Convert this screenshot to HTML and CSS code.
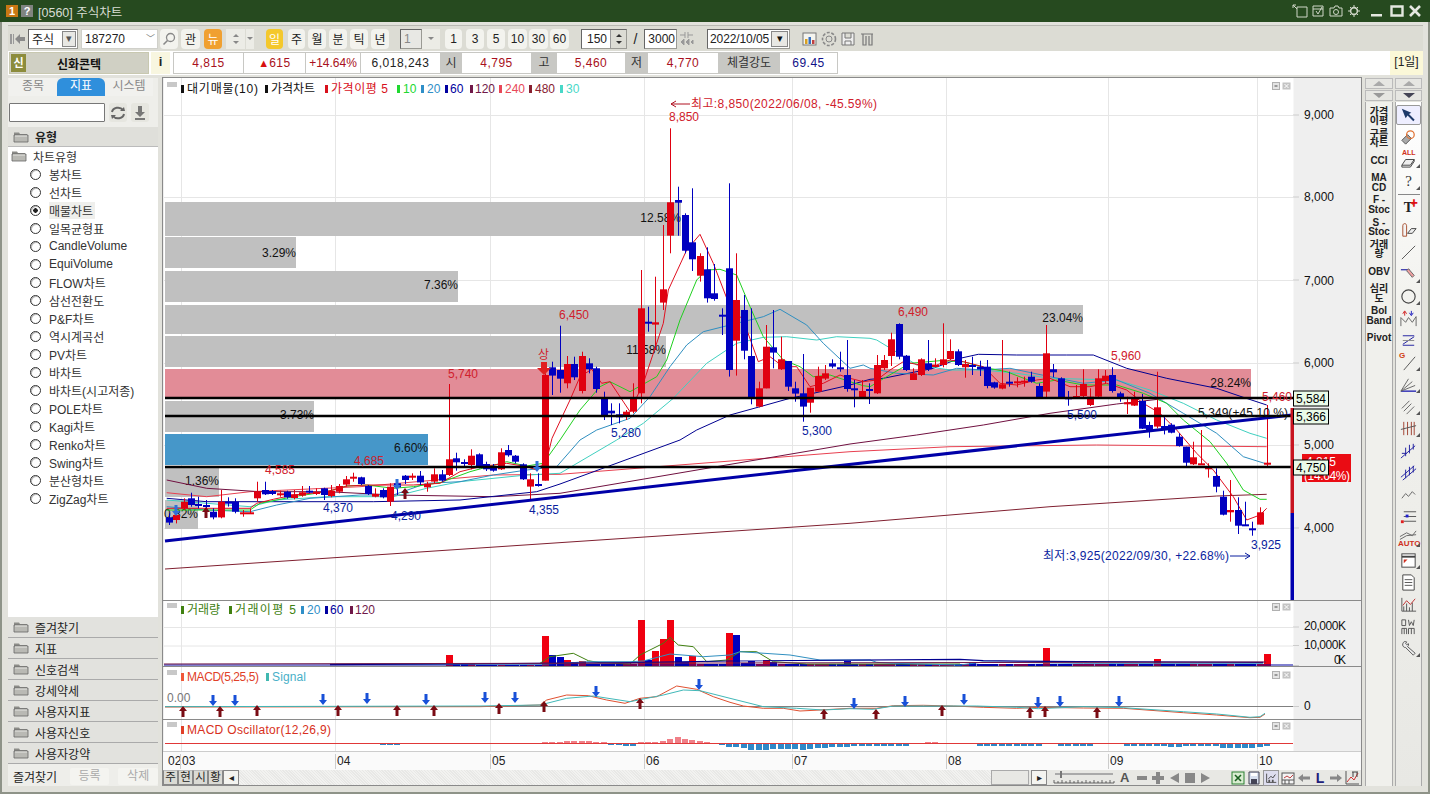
FILE: index.html
```html
<!DOCTYPE html>
<html lang="ko">
<head>
<meta charset="utf-8">
<title>[0560] 주식차트</title>
<link rel="stylesheet" href="styles.css">
</head>
<body>
<svg class="defs" width="0" height="0" aria-hidden="true">
  <symbol id="folder" viewBox="0 0 16 12"><path d="M1 3 V1.5 H6 L7 3 H14 V5 H1Z" fill="#8c8c88"/><path d="M1 4 H15 V11 H1Z" fill="#b9b9b4" stroke="#666" stroke-width=".8"/><path d="M2 5 H14" stroke="#e6e6e2"/></symbol>
  <symbol id="ctl" viewBox="0 0 19 8"><rect x=".5" y=".5" width="7" height="7" fill="#e4e4e4" stroke="#b0b0b0"/><rect x="2.5" y="3" width="3" height="2" fill="#999"/><rect x="10.5" y=".5" width="8" height="7" fill="#c4c4c4"/><path d="M12.5 2 L16.5 6 M16.5 2 L12.5 6" stroke="#fff"/></symbol>
</svg>
<div class="window">
  <header class="titlebar">
    <span class="tb-badge tb-one">1</span><span class="tb-badge tb-help">?</span>
    <span class="tb-title">[0560] 주식차트</span>
    <span class="tb-right">
      <svg width="16" height="14" viewBox="0 0 16 14"><path d="M5 3 H15 V13 H5Z M1 1 L5 5 M1 1 H4 M1 1 V4" fill="none" stroke="#cfd6c8"/></svg>
      <svg width="16" height="14" viewBox="0 0 16 14"><path d="M3 2 H13 V12 H3Z M6 7 L8 10 L12 3 M3 5 H13" fill="none" stroke="#cfd6c8"/></svg>
      <svg width="16" height="14" viewBox="0 0 16 14"><path d="M2 4 H6 L7 2 H10 L11 4 H14 V12 H2Z" fill="none" stroke="#cfd6c8"/><circle cx="8" cy="8" r="2.5" fill="none" stroke="#cfd6c8"/></svg>
      <svg width="16" height="14" viewBox="0 0 16 14"><circle cx="8" cy="7" r="3.4" fill="none" stroke="#cfd6c8" stroke-width="1.6"/><path d="M8 1V3 M8 11V13 M2 7H4 M12 7H14 M4 3L5.5 4.5 M12 3L10.5 4.5 M4 11L5.5 9.5 M12 11L10.5 9.5" stroke="#cfd6c8"/></svg>
      <svg class="tb-gap" width="14" height="14" viewBox="0 0 14 14"><rect x="1" y="10" width="11" height="2.5" fill="#e4e8e0"/></svg>
      <svg class="tb-max" width="14" height="14" viewBox="0 0 14 14"><path d="M1.5 2.5 H12.5 V11.5 H1.5Z" fill="none" stroke="#e4e8e0" stroke-width="2.4"/></svg>
      <svg width="14" height="14" viewBox="0 0 14 14"><path d="M2 2 L12 12 M12 2 L2 12" stroke="#e4e8e0" stroke-width="2.6"/></svg>
    </span>
  </header>

  <div class="frame">
    <div class="toolbar">
      <svg class="t-prev" width="17" height="14" viewBox="0 0 17 14"><path d="M1 2H3V12H1Z M4 2H5V12H4Z" fill="#9a9a9a"/><path d="M6 7L11 2V5H16V9H11V12Z" fill="#8a8a8a"/></svg>
      <span class="field f-market"><span class="f-text">주식</span><span class="combo-btn">▾</span></span>
      <span class="field f-code"><span class="f-text">187270</span><span class="chev">﹀</span></span>
      <span class="tbtn t-search"><svg width="14" height="14" viewBox="0 0 14 14"><circle cx="8.5" cy="5.5" r="4" fill="none" stroke="#888" stroke-width="1.3"/><path d="M5.5 8.5L1.5 12.5" stroke="#888" stroke-width="1.6"/></svg></span>
      <span class="tbtn t-gwan">관</span>
      <span class="tbtn t-orange">뉴</span>
      <span class="spin-pair"><i class="tri-up"></i><i class="tri-dn"></i></span>
      <span class="mini-dn"><i class="tri-dn"></i></span>
      <span class="tbtn t-yellow">일</span>
      <span class="tbtn t-week">주</span><span class="tbtn t-per">월</span><span class="tbtn t-per">분</span><span class="tbtn t-per">틱</span><span class="tbtn t-per">년</span>
      <span class="field f-period"><span class="f-text f-dim">1</span></span><span class="mini-dn mini-dn2"><i class="tri-dn"></i></span>
      <span class="tbtn t-n1">1</span><span class="tbtn t-n3">3</span><span class="tbtn t-n5">5</span><span class="tbtn t-n10">10</span><span class="tbtn t-n30">30</span><span class="tbtn t-n30">60</span>
      <span class="field f-count"><span class="f-right">150</span><span class="updown"><i class="tri-up"></i><i class="tri-dn"></i></span></span>
      <span class="slash">/</span>
      <span class="field f-total"><span class="f-right">3000</span></span>
      <svg class="t-arrows" width="15" height="15" viewBox="0 0 15 15"><path d="M1 4H6 M6 1V7 M9 1V7 M9 4H14 M2 11L5 8V14Z M7 11L10 8V14Z M12 11L14 9V13Z" stroke="#999" fill="#999"/></svg>
      <span class="field f-date"><span class="f-text">2022/10/05</span><span class="combo-btn combo-dark">▾</span></span>
      <span class="t-tools">
        <svg width="18" height="18" viewBox="0 0 18 18"><rect x="2" y="3" width="13" height="12" fill="#f4f4ee" stroke="#777"/><rect x="4" y="9" width="2.5" height="5" fill="#d8a020"/><rect x="7.5" y="7" width="2.5" height="7" fill="#3870c0"/><rect x="11" y="10" width="2.5" height="4" fill="#c04040"/></svg>
        <svg width="18" height="18" viewBox="0 0 18 18"><circle cx="9" cy="9" r="3" fill="none" stroke="#888"/><circle cx="9" cy="9" r="6.5" fill="none" stroke="#888" stroke-dasharray="3 1.6" stroke-width="1.6"/></svg>
        <svg width="18" height="18" viewBox="0 0 18 18"><path d="M3 3H15V15H3Z M6 3V8H12V3 M6 15V11H12V15" fill="#eee" stroke="#777"/></svg>
        <svg width="18" height="18" viewBox="0 0 18 18"><path d="M3 4H15 M5 4V15H8V6 M11 6V15H14V4" fill="none" stroke="#777" stroke-width="1.2"/></svg>
      </span>
    </div>

    <div class="inforow">
      <span class="name"><b class="name-b">신</b><b class="name-t">신화콘텍</b></span>
      <span class="info-i">i</span>
      <span class="cell c71 first red">4,815</span>
      <span class="cell c62 red"><em class="up">▲</em>615</span>
      <span class="cell c55 red">+14.64%</span>
      <span class="cell c80">6,018,243</span>
      <span class="cell ch c21">시</span>
      <span class="cell c70 red">4,795</span>
      <span class="cell ch c25">고</span>
      <span class="cell c69 red">5,460</span>
      <span class="cell ch c22">저</span>
      <span class="cell c71 red">4,770</span>
      <span class="cell ch c61">체결강도</span>
      <span class="cell c59 navy">69.45</span>
      <span class="fill"></span>
      <span class="period">[1일]</span>
    </div>

    <div class="workspace">
      <aside class="sidebar">
        <div class="sb-tabs"><span class="sb-tab">종목</span><span class="sb-tab on">지표</span><span class="sb-tab">시스템</span></div>
        <div class="sb-search">
          <span class="sb-input"></span>
          <span class="sb-ibtn"><svg width="16" height="14" viewBox="0 0 16 14"><path d="M2 6A6 5 0 0 1 13 4 M14 8A6 5 0 0 1 3 10" fill="none" stroke="#666" stroke-width="2"/><path d="M10 5L15 5L14 1Z M6 9L1 9L2 13Z" fill="#666"/></svg></span>
          <span class="sb-ibtn"><svg width="14" height="16" viewBox="0 0 14 16"><path d="M5 1H9V7H12L7 12L2 7H5Z M2 13H12V15H2Z" fill="#777"/></svg></span>
        </div>
        <div class="sb-head"><svg class="fold" width="16" height="12"><use href="#folder"/></svg><b>유형</b></div>
        <div class="sb-list">
          <div class="sb-root"><svg class="fold" width="16" height="12"><use href="#folder"/></svg>차트유형</div>
          <div class="sb-item"><i class="radio"></i>봉차트</div>
          <div class="sb-item"><i class="radio"></i>선차트</div>
          <div class="sb-item"><i class="radio sel"></i><span class="hl">매물차트</span></div>
          <div class="sb-item"><i class="radio"></i>일목균형표</div>
          <div class="sb-item"><i class="radio"></i>CandleVolume</div>
          <div class="sb-item"><i class="radio"></i>EquiVolume</div>
          <div class="sb-item"><i class="radio"></i>FLOW차트</div>
          <div class="sb-item"><i class="radio"></i>삼선전환도</div>
          <div class="sb-item"><i class="radio"></i>P&amp;F차트</div>
          <div class="sb-item"><i class="radio"></i>역시계곡선</div>
          <div class="sb-item"><i class="radio"></i>PV차트</div>
          <div class="sb-item"><i class="radio"></i>바차트</div>
          <div class="sb-item"><i class="radio"></i>바차트(시고저종)</div>
          <div class="sb-item"><i class="radio"></i>POLE차트</div>
          <div class="sb-item"><i class="radio"></i>Kagi차트</div>
          <div class="sb-item"><i class="radio"></i>Renko차트</div>
          <div class="sb-item"><i class="radio"></i>Swing차트</div>
          <div class="sb-item"><i class="radio"></i>분산형차트</div>
          <div class="sb-item"><i class="radio"></i>ZigZag차트</div>
        </div>
        <div class="sb-acc"><svg class="fold" width="16" height="12"><use href="#folder"/></svg>즐겨찾기</div>
        <div class="sb-acc"><svg class="fold" width="16" height="12"><use href="#folder"/></svg>지표</div>
        <div class="sb-acc"><svg class="fold" width="16" height="12"><use href="#folder"/></svg>신호검색</div>
        <div class="sb-acc"><svg class="fold" width="16" height="12"><use href="#folder"/></svg>강세약세</div>
        <div class="sb-acc"><svg class="fold" width="16" height="12"><use href="#folder"/></svg>사용자지표</div>
        <div class="sb-acc"><svg class="fold" width="16" height="12"><use href="#folder"/></svg>사용자신호</div>
        <div class="sb-acc"><svg class="fold" width="16" height="12"><use href="#folder"/></svg>사용자강약</div>
        <div class="sb-foot"><span class="sb-fav">즐겨찾기</span><span class="sb-fbtn">등록</span><span class="sb-fbtn">삭제</span></div>
      </aside>

      <section class="chart">
        <svg class="plot" width="1198" height="522" viewBox="163 78 1198 522">
          <rect class="axis" x="163" y="78" width="1198" height="522"/>
          <rect class="paper" x="164" y="78" width="1129.5" height="522"/>
          <g id="grid-main"></g>
          <rect class="vp" x="165" y="202" width="516" height="34"/>
          <rect class="vp" x="165" y="237" width="131" height="31"/>
          <rect class="vp" x="165" y="271" width="293" height="31"/>
          <rect class="vp" x="165" y="305" width="918" height="29"/>
          <rect class="vp" x="165" y="336" width="501" height="31"/>
          <rect class="vp-pink" x="165" y="369" width="1086" height="29"/>
          <rect class="vp" x="165" y="401" width="149" height="31"/>
          <rect class="vp-blue" x="165" y="434" width="263" height="31"/>
          <rect class="vp" x="165" y="468" width="54" height="29"/>
          <rect class="vp" x="165" y="500" width="33" height="29"/>
          <g class="pct">
            <text x="296" y="257">3.29%</text><text x="681" y="222">12.58%</text><text x="458" y="289">7.36%</text>
            <text x="1083" y="322">23.04%</text><text x="666" y="354">11.58%</text><text x="1251" y="387">28.24%</text>
            <text x="314" y="419">3.73%</text><text x="428" y="452">6.60%</text><text x="219" y="485">1.36%</text><text x="198" y="518">0.82%</text>
          </g>
          <g id="mas"></g>
          <g id="candles"></g>
          <line class="trend" x1="165" y1="541" x2="1292" y2="415"/>
          <g class="hl-lines"><line x1="165" y1="398" x2="1293" y2="398"/><line x1="165" y1="416" x2="1293" y2="416"/><line x1="165" y1="467" x2="1293" y2="467"/></g>
          <g id="arrows-main"></g>
          <g class="lbl-red">
            <text x="669" y="121">8,850</text><text x="559" y="319">6,450</text><text x="448" y="378">5,740</text><text x="265" y="474">4,585</text>
            <text x="354" y="465">4,685</text><text x="898" y="316">6,490</text><text x="1111" y="360">5,960</text><text x="1262" y="401">5,460</text>
            <text x="538" y="359">상</text>
            <text x="691" y="108" textLength="186">최고:8,850(2022/06/08, -45.59%)</text>
          </g>
          <path class="red-arrow" d="M671 104 H690 M671 104 L676 101 M671 104 L676 107"/>
          <g class="lbl-blue">
            <text x="611" y="437">5,280</text><text x="802" y="435">5,300</text><text x="1067" y="419">5,500</text><text x="323" y="512">4,370</text>
            <text x="391" y="520">4,290</text><text x="529" y="514">4,355</text><text x="1251" y="549">3,925</text>
            <text x="1043" y="560" textLength="186">최저:3,925(2022/09/30, +22.68%)</text>
          </g>
          <path class="blue-arrow" d="M1230 556 H1250 M1250 556 L1245 553 M1250 556 L1245 559"/>
          <text class="lbl-black" x="1198" y="417" textLength="90">5,349(+45.10 %)</text>
          <g class="ticks"><path d="M1293 115H1299 M1293 197H1299 M1293 280H1299 M1293 363H1299 M1293 445H1299 M1293 528H1299"/></g>
          <g class="ax-txt"><text x="1304" y="119">9,000</text><text x="1304" y="201">8,000</text><text x="1304" y="285">7,000</text><text x="1304" y="367">6,000</text><text x="1304" y="449">5,000</text><text x="1304" y="532">4,000</text></g>
          <rect class="cur-red" x="1302" y="454" width="49" height="28"/>
          <text class="cur-txt" x="1306" y="466">4,815</text><text class="cur-txt" x="1304" y="480" textLength="46">(14.64%)</text>
          <rect class="bar-r" x="1290.5" y="408" width="3.5" height="105"/><rect class="bar-b" x="1290.5" y="513" width="3.5" height="87"/>
          <g class="tag"><rect x="1293.5" y="391" width="35" height="15"/><text x="1296" y="403">5,584</text><rect x="1293.5" y="409" width="35" height="15"/><text x="1296" y="421">5,366</text><rect x="1293.5" y="460" width="35" height="15"/><text x="1296" y="472">4,750</text></g>
          <rect class="tagmark" x="167" y="82" width="10" height="5"/>
          <use href="#ctl" x="1272" y="82" width="19" height="8"/>
          <g class="legend">
            <rect class="mk" x="181" y="85" width="3" height="8" fill="#111"/><text x="187" y="93" fill="#111" textLength="71">대기매물(10)</text>
            <rect class="mk" x="265" y="85" width="3" height="8" fill="#111"/><text x="271" y="93" fill="#111">가격차트</text>
            <rect class="mk" x="325" y="85" width="3" height="8" fill="#d8101c"/><text x="331" y="93" fill="#d8101c" textLength="57">가격이평 5</text>
            <rect class="mk" x="397" y="85" width="3" height="8" fill="#20d830"/><text x="403" y="93" fill="#20d830">10</text>
            <rect class="mk" x="421" y="85" width="3" height="8" fill="#2f8fc8"/><text x="427" y="93" fill="#2f8fc8">20</text>
            <rect class="mk" x="445" y="85" width="3" height="8" fill="#0000a0"/><text x="450" y="93" fill="#0000a0">60</text>
            <rect class="mk" x="470" y="85" width="3" height="8" fill="#701848"/><text x="475" y="93" fill="#701848">120</text>
            <rect class="mk" x="499" y="85" width="3" height="8" fill="#e84858"/><text x="505" y="93" fill="#e84858">240</text>
            <rect class="mk" x="529" y="85" width="3" height="8" fill="#882030"/><text x="535" y="93" fill="#882030">480</text>
            <rect class="mk" x="560" y="85" width="3" height="8" fill="#48d8c8"/><text x="566" y="93" fill="#48d8c8">30</text>
          </g>
        </svg>

        <svg class="plot" width="1198" height="66" viewBox="163 600 1198 66">
          <rect class="axis" x="163" y="600" width="1198" height="66"/>
          <rect class="paper" x="164" y="601" width="1129.5" height="65"/>
          <line class="sepline" x1="163" y1="600.5" x2="1361" y2="600.5"/>
          <g id="grid-vol"></g>
          <g id="volbars"></g>
          <g id="vollines"></g>
          <rect class="tagmark" x="167" y="603" width="10" height="5"/>
          <use href="#ctl" x="1272" y="603" width="19" height="8"/>
          <g class="legend">
            <rect class="mk" x="181" y="606" width="3" height="8" fill="#408010"/><text x="187" y="614" fill="#408010">거래량</text>
            <rect class="mk" x="229" y="606" width="3" height="8" fill="#408010"/><text x="235" y="614" fill="#408010" textLength="61">거래이평 5</text>
            <rect class="mk" x="301" y="606" width="3" height="8" fill="#2f8fc8"/><text x="307" y="614" fill="#2f8fc8">20</text>
            <rect class="mk" x="325" y="606" width="3" height="8" fill="#0000a0"/><text x="330" y="614" fill="#0000a0">60</text>
            <rect class="mk" x="350" y="606" width="3" height="8" fill="#701848"/><text x="355" y="614" fill="#701848">120</text>
          </g>
          <g class="ticks"><path d="M1293 627H1299 M1293 645.5H1299 M1293 665.5H1299"/></g>
          <g class="ax-txt"><text x="1304" y="630" textLength="42">20,000K</text><text x="1304" y="649" textLength="42">10,000K</text><text x="1334" y="664" textLength="12">0K</text></g>
        </svg>

        <svg class="plot" width="1198" height="53" viewBox="163 666 1198 53">
          <rect class="axis" x="163" y="666" width="1198" height="53"/>
          <rect class="paper" x="164" y="667" width="1129.5" height="52"/>
          <line class="sepline" x1="163" y1="666.5" x2="1361" y2="666.5"/>
          <g id="grid-macd"></g>
          <line class="zero" x1="165" y1="706.5" x2="1293" y2="706.5"/>
          <g id="macdlines"></g>
          <g id="arrows-macd"></g>
          <rect class="tagmark" x="167" y="670" width="10" height="5"/>
          <use href="#ctl" x="1272" y="671" width="19" height="8"/>
          <g class="legend">
            <rect class="mk" x="181" y="673" width="3" height="8" fill="#f05838"/><text x="187" y="681" fill="#e04028" textLength="72">MACD(5,25,5)</text>
            <rect class="mk" x="266" y="673" width="3" height="8" fill="#40b8b0"/><text x="272" y="681" fill="#48b0c8" textLength="34">Signal</text>
          </g>
          <text class="zero-txt" x="167" y="702">0.00</text>
          <g class="ticks"><path d="M1293 706.5H1299"/></g>
          <g class="ax-txt"><text x="1304" y="710">0</text></g>
        </svg>

        <svg class="plot" width="1198" height="32" viewBox="163 719 1198 32">
          <rect class="axis" x="163" y="719" width="1198" height="32"/>
          <rect class="paper" x="164" y="720" width="1129.5" height="31"/>
          <line class="sepline" x1="163" y1="719.5" x2="1361" y2="719.5"/>
          <g id="grid-osc"></g>
          <g id="oscbars"></g>
          <line class="osc0" x1="165" y1="743.5" x2="1293" y2="743.5"/>
          <rect class="tagmark" x="167" y="722" width="10" height="5"/>
          <use href="#ctl" x="1272" y="722" width="19" height="8"/>
          <g class="legend">
            <rect class="mk" x="181" y="726" width="3" height="8" fill="#e04028"/><text x="187" y="734" fill="#d83020" textLength="144">MACD Oscillator(12,26,9)</text>
          </g>
        </svg>

        <div class="dates">
          <span class="d d02">02</span><span class="d d03">03</span><span class="d d04">04</span><span class="d d05">05</span><span class="d d06">06</span><span class="d d07">07</span><span class="d d08">08</span><span class="d d09">09</span><span class="d d10">10</span>
        </div>

        <div class="bottombar">
          <span class="btab">주</span><span class="btab">현</span><span class="btab">시</span><span class="btab">황</span><span class="bnav">◂</span>
          <span class="dither"></span>
          <span class="scrollbox"></span><span class="bnav">▸</span>
          <svg class="slider" width="64" height="15" viewBox="0 0 64 15"><path d="M2 4H60" stroke="#aaa" stroke-width="2"/><rect x="7" y="1" width="2" height="7" fill="#777"/><path d="M1 13H61 M1 10V13 M5 11V13 M9 10V13 M13 11V13 M17 10V13 M21 11V13 M25 10V13 M29 11V13 M33 10V13 M37 11V13 M41 10V13 M45 11V13 M49 10V13 M53 11V13 M57 10V13 M61 11V13" stroke="#444" fill="none" stroke-width=".8"/></svg>
          <span class="bicons">
            <b class="icA">A</b>
            <svg width="12" height="12" viewBox="0 0 12 12"><rect x="1" y="4" width="10" height="4" fill="#888"/></svg>
            <svg width="12" height="12" viewBox="0 0 12 12"><path d="M4 0H8V4H12V8H8V12H4V8H0V4H4Z" fill="#888"/></svg>
            <svg width="12" height="12" viewBox="0 0 12 12"><path d="M11 1V11L2 6Z" fill="#888"/></svg>
            <svg width="12" height="12" viewBox="0 0 12 12"><rect x="1" y="1" width="10" height="10" fill="#888"/></svg>
            <svg width="12" height="12" viewBox="0 0 12 12"><path d="M1 1V11L10 6Z" fill="#888"/></svg>
          </span>
          <span class="bicons2">
            <svg width="14" height="14" viewBox="0 0 14 14"><rect x="1" y="1" width="12" height="12" fill="#d8ecd0" stroke="#2a8030"/><path d="M4 4L10 10 M10 4L4 10" stroke="#1a6020" stroke-width="1.6"/></svg>
            <svg width="14" height="14" viewBox="0 0 14 14"><path d="M2 1H12V13H2Z" fill="#d8e0ee" stroke="#445"/><rect x="4" y="8" width="6" height="5" fill="#445"/><rect x="4" y="2" width="6" height="3" fill="#fff"/></svg>
            <svg class="ib-on" width="16" height="16" viewBox="0 0 16 16"><path d="M3 3V13H14" fill="none" stroke="#444"/><path d="M5 9L8 6L10 8L13 4" fill="none" stroke="#333"/><rect x="5" y="10" width="2" height="3" fill="#555"/><rect x="9" y="10" width="2" height="3" fill="#555"/></svg>
            <svg width="14" height="14" viewBox="0 0 14 14"><rect x="1" y="2" width="12" height="11" fill="#f4f4f4" stroke="#555"/><path d="M3 7L6 5L9 7L12 4" stroke="#c04040" fill="none"/><path d="M1 9H13 M4 9V13 M8 9V13" stroke="#555"/></svg>
            <svg width="14" height="14" viewBox="0 0 14 14"><path d="M1 7L6 3V5.5H13V8.5H6V11Z" fill="#888"/></svg>
            <b class="icL">L</b>
            <svg width="14" height="14" viewBox="0 0 14 14"><path d="M13 7L8 3V5.5H1V8.5H8V11Z" fill="#888"/></svg>
            <svg width="15" height="15" viewBox="0 0 15 15"><path d="M1 1V14H14" fill="none" stroke="#555"/><path d="M2 12L6 7L9 10L13 3" fill="none" stroke="#d03030"/><path d="M7 2H13 M8 2V7 M12 2V7" stroke="#444" fill="none"/></svg>
          </span>
        </div>
      </section>

      <div class="rails">
        <div class="rail-head">
          <span class="rh-btn"><i class="tri-up tri-lg"></i></span><span class="rh-btn"><i class="tri-dn tri-lg"></i></span>
        </div>
        <div class="rail-head">
          <span class="rh-btn"><i class="tri-up tri-lg"></i></span><span class="rh-btn"><i class="tri-dn tri-lg tri-dark"></i></span>
        </div>
        <div class="rail rail-text">
          <span class="r1">가격<br>이평</span><span class="r1">구름<br>차트</span><span class="r1">CCI</span><span class="r1">MA<br>CD</span>
          <span class="r1">F -<br>Stoc</span><span class="r1">S -<br>Stoc</span><span class="r1">거래<br>량</span><span class="r1">OBV</span>
          <span class="r1">심리<br>도</span><span class="r1">Bol<br>Band</span><span class="r1">Pivot</span>
        </div>
        <div class="rail rail-icons">
          <span class="ri ri-on"><svg viewBox="0 0 20 20"><path d="M3 3L7 13L9 10L15 16L16.5 14.5L10.5 8.5L13 7Z" fill="#1e3a6a"/></svg></span>
          <span class="ri"><svg viewBox="0 0 20 20"><path d="M3 13L9 7L13 11L7 17Z" fill="#aaa" stroke="#555"/><circle cx="12" cy="7" r="4" fill="none" stroke="#e07030" stroke-width="1.3"/></svg></span>
          <span class="ri"><svg viewBox="0 0 20 20"><path d="M3 16L7 10H16L12 16Z M16 10V12L12 18H3V16" fill="#eee" stroke="#444"/></svg><em class="all">ALL</em><i class="corner"></i></span>
          <span class="ri"><em class="qm">?</em><i class="corner"></i></span>
          <span class="ri-sep"></span>
          <span class="ri"><em class="tt">T</em><em class="plus">✚</em></span>
          <span class="ri"><svg viewBox="0 0 20 20"><path d="M4 5C4 2 8 2 8 5V16H4Z" fill="#f4f4f4" stroke="#a85030"/><path d="M9 13L13 8H18L14 13Z" fill="#eee" stroke="#444"/></svg></span>
          <span class="ri"><svg viewBox="0 0 20 20"><path d="M3 17L17 3" stroke="#555"/></svg></span>
          <span class="ri"><svg viewBox="0 0 20 20"><path d="M2 5H11" stroke="#2020a0" stroke-width="1.2"/><path d="M8 6L14 13L16 11L10 4Z" fill="#f0a0a0" stroke="#666"/></svg><i class="corner"></i></span>
          <span class="ri"><svg viewBox="0 0 20 20"><circle cx="10" cy="10" r="7" fill="none" stroke="#444" stroke-width="1.2"/></svg><i class="corner"></i></span>
          <span class="ri"><svg viewBox="0 0 20 20"><path d="M6 3V7 M4 5L6 2L8 5" stroke="#d02020" fill="none"/><path d="M13 2V6 M11 4L13 7L15 4" stroke="#2020c0" fill="none"/><path d="M2 18V9L7 14L10 9L14 14L18 8V18" stroke="#666" fill="none"/></svg></span>
          <span class="ri"><svg viewBox="0 0 20 20"><path d="M4 5H16 M4 15H16" stroke="#2020a0"/><path d="M4 14L16 6" stroke="#2020a0"/><path d="M4 10H16" stroke="#888"/></svg></span>
          <span class="ri"><em class="gg">G</em><svg viewBox="0 0 20 20"><path d="M5 18L17 4" stroke="#555"/></svg><i class="corner"></i></span>
          <span class="ri"><svg viewBox="0 0 20 20"><path d="M2 17H18" stroke="#2020b0" stroke-width="1.4"/><path d="M2 17L10 4 M2 17L14 7 M2 17L17 11" stroke="#666"/></svg><i class="corner"></i></span>
          <span class="ri"><svg viewBox="0 0 20 20"><path d="M3 12L11 4 M5 15L13 7 M8 18L16 10" stroke="#666"/></svg><i class="corner"></i></span>
          <span class="ri"><svg viewBox="0 0 20 20"><path d="M5 3V17 M9 3V17 M13 3V17 M16 3V17" stroke="#a04030"/><path d="M2 11L18 7" stroke="#555"/></svg><i class="corner"></i></span>
          <span class="ri"><svg viewBox="0 0 20 20"><path d="M2 18L17 5 M7 16V7 M11 13V4 M15 9V3 M3 13L8 13" stroke="#2020a0" fill="none"/></svg></span>
          <span class="ri"><svg viewBox="0 0 20 20"><path d="M2 15L16 3 M4 18L18 6 M7 16V7 M11 13V4 M15 10V3" stroke="#2020a0" fill="none"/></svg></span>
          <span class="ri"><svg viewBox="0 0 20 20"><path d="M3 14L7 9L10 12L14 7L17 10" stroke="#666" fill="none"/></svg></span>
          <span class="ri"><svg viewBox="0 0 20 20"><path d="M5 5H18 M5 10H18 M5 15L18 15" stroke="#555"/><rect x="2" y="14" width="3" height="3" fill="#e02020"/><rect x="7" y="8" width="3" height="3" fill="#2020d0"/></svg></span>
          <span class="ri"><svg viewBox="0 0 20 20"><path d="M1 8L8 4L14 7L18 2M1 11L8 7L18 6" stroke="#666" fill="none"/></svg><em class="auto">AUTO</em><i class="corner"></i></span>
          <span class="ri"><svg viewBox="0 0 20 20"><rect x="3" y="3" width="14" height="14" fill="#fff" stroke="#444"/><path d="M3 6H17" stroke="#444" stroke-width="2"/><path d="M5 9H9L5 13Z" fill="#d03020"/></svg><i class="corner"></i></span>
          <span class="ri"><svg viewBox="0 0 20 20"><path d="M4 2H13L16 5V18H4Z" fill="#fff" stroke="#444"/><path d="M6 7H14 M6 10H14 M6 13H14" stroke="#555"/></svg></span>
          <span class="ri"><svg viewBox="0 0 20 20"><path d="M3 3V17H18" fill="none" stroke="#555"/><path d="M5 17V12 M8 17V9 M11 17V13 M14 17V8" stroke="#555"/><path d="M4 11L8 6L12 10L17 4" stroke="#c03030" fill="none"/></svg></span>
          <span class="ri"><svg viewBox="0 0 20 20"><path d="M3 3H7V9H3Z M10 3L11 9L13 5L15 9L16 3 M3 12H8V18 M3 12V18 M5.5 12V18 M10 18V12H16V18 M13 12V18" stroke="#555" fill="none"/></svg></span>
          <span class="ri"><svg viewBox="0 0 20 20"><path d="M4 5A3 3 0 0 1 8 3L7 5L8 6L10 5A3 3 0 0 1 9 8L17 15L15 17L7 9A3 3 0 0 1 4 5Z" fill="#eee" stroke="#555"/></svg><i class="corner"></i></span>
        </div>
      </div>
    </div>
  </div>
</div>
<script src="chart.js"></script>
</body>
</html>
```

FILE: styles.css
```css
* { box-sizing: border-box; }
html, body { margin: 0; padding: 0; }
body { width: 1430px; height: 794px; overflow: hidden; background: #d8d8d2; font: 12px "Liberation Sans", "Noto Sans CJK KR", sans-serif; color: #222; }
.defs { position: absolute; }
.window { width: 1430px; height: 794px; display: flex; flex-direction: column; border-left: 2px solid #8e9388; border-right: 2px solid #8e9388; border-bottom: 2px solid #8e9388; background: #e2e2dc; }

.titlebar { height: 22px; margin: 0 -2px; background: #264a1f; display: flex; align-items: center; padding-left: 6px; color: #d8ddd4; font-size: 12.5px; }
.tb-badge { width: 12px; height: 12px; margin-right: 3px; text-align: center; font: bold 11px/12px "Liberation Sans", sans-serif; color: #fff; }
.tb-one { background: #c87814; }
.tb-help { background: #808480; }
.tb-title { margin-left: 2px; }
.tb-right { margin-left: auto; margin-right: 8px; display: flex; gap: 2px; align-items: center; }
.tb-gap { margin-left: 6px; }
.tb-max { margin: 0 2px 0 4px; }

.frame { flex: 1; display: flex; flex-direction: column; padding: 3px 0 0 6px; min-height: 0; }
.toolbar { height: 26px; display: flex; align-items: center; background: #dcdcd4; margin: 0 5px 0 0; padding-left: 1px; border-top: 1px solid #b8b8b2; }
.field { height: 20px; display: inline-flex; align-items: center; background: #fff; border: 1px solid #9a9a94; border-top-color: #666; border-left-color: #666; position: relative; flex: none; }
.f-text { padding-left: 3px; }
.f-dim { color: #888; }
.f-right { flex: 1; text-align: right; padding-right: 3px; }
.f-market { width: 50px; margin-left: 2px; }
.f-code { width: 77px; margin-left: 3px; border-color: #d0d0ca; }
.f-code .chev { margin-left: auto; margin-right: 2px; color: #777; font-size: 9px; }
.combo-btn { width: 14px; height: 16px; margin-left: auto; margin-right: 1px; border: 1px solid #888; background: #e8e8e4; color: #555; font-size: 11px; line-height: 13px; text-align: center; }
.combo-dark { width: 17px; color: #111; }
.tbtn { width: 18px; height: 20px; background: #f3f3ee; border-radius: 4px; display: inline-flex; align-items: center; justify-content: center; font-size: 12px; color: #222; flex: none; }
.t-search { margin-left: 2px; }
.t-gwan { width: 19px; margin-left: 3px; }
.t-orange { background: #f0a030; color: #fff; margin-left: 4px; }
.t-yellow { background: #f4c82c; color: #fff; margin-left: 12px; width: 17px; }
.t-week { width: 17px; margin-left: 5px; }
.t-per { margin-left: 3px; }
.t-n1 { width: 17px; margin-left: 5px; }
.t-n3 { margin-left: 4px; }
.t-n5 { margin-left: 3px; }
.t-n10 { width: 19px; margin-left: 3px; }
.t-n30 { width: 19px; margin-left: 2px; }
.spin-pair { width: 19px; height: 20px; display: inline-flex; flex-direction: column; align-items: center; justify-content: center; gap: 4px; background: #ecece6; margin-left: 4px; flex: none; }
.mini-dn { width: 8px; height: 20px; display: inline-flex; align-items: center; justify-content: center; background: #ecece6; margin-left: 1px; flex: none; }
.mini-dn2 { width: 18px; margin-left: 0; }
.tri-up, .tri-dn { display: block; width: 0; height: 0; border-left: 3px solid transparent; border-right: 3px solid transparent; }
.tri-up { border-bottom: 3px solid #888; }
.tri-dn { border-top: 3px solid #888; }
.tri-lg { border-left-width: 6px; border-right-width: 6px; }
.tri-lg.tri-up { border-bottom-width: 5px; border-bottom-color: #aaa; }
.tri-lg.tri-dn { border-top-width: 5px; border-top-color: #999; }
.tri-lg.tri-dark { border-top-color: #445; }
.f-period { width: 22px; margin-left: 11px; background: #e8e8e4; }
.f-count { width: 46px; margin-left: 12px; }
.updown { width: 16px; height: 18px; display: flex; flex-direction: column; align-items: center; justify-content: center; gap: 4px; background: #dcdcd4; border-left: 1px solid #999; flex: none; }
.updown .tri-up { border-bottom-color: #333; }
.updown .tri-dn { border-top-color: #333; }
.slash { width: 17px; text-align: center; font-size: 14px; flex: none; }
.f-total { width: 33px; }
.f-total .f-right { padding-right: 1px; }
.t-arrows { margin-left: 2px; flex: none; }
.f-date { width: 83px; margin-left: 13px; }
.f-date .f-text { padding-left: 2px; letter-spacing: -.1px; }
.t-tools { display: flex; gap: 1px; margin-left: 11px; }

.inforow { height: 24px; display: flex; align-items: center; margin-right: 5px; background: #fff; padding-left: 1px; font-size: 12px; }
.name { width: 140px; height: 22px; background: #d0d0c4; border: 1px solid #c8c8b0; display: inline-flex; align-items: center; position: relative; }
.name-b { width: 15px; height: 18px; margin-left: 1px; background: #8c8c3c; color: #fff; text-align: center; line-height: 18px; font-size: 11px; }
.name-t { flex: 1; text-align: center; font-size: 12px; color: #111; padding-right: 16px; }
.info-i { width: 19px; height: 22px; margin: 0 3px 0 2px; background: #f8f6e0; text-align: center; font: bold 13px/20px "Liberation Sans", sans-serif; }
.cell { height: 22px; line-height: 20px; text-align: center; border: 1px solid #c8c8c4; border-left: 0; letter-spacing: .5px; flex: none; }
.first { border-left: 1px solid #c8c8c4; }
.c71 { width: 71px; } .c62 { width: 62px; } .c55 { width: 55px; letter-spacing: 0; } .c80 { width: 80px; }
.c21 { width: 21px; } .c70 { width: 70px; } .c69 { width: 69px; } .c25 { width: 25px; } .c22 { width: 22px; } .c61 { width: 61px; } .c59 { width: 58px; }
.ch { background: #c8c8c4; color: #333; letter-spacing: 0; }
.red { color: #a81020; }
.navy { color: #101088; }
.up { font-style: normal; color: #d81010; font-size: 11px; letter-spacing: 0; }
.fill { flex: 1; }
.period { width: 33px; height: 24px; background: #fbf8d8; line-height: 22px; text-align: center; color: #222; }

.workspace { flex: 1; display: flex; min-height: 0; margin-top: 2px; }
.sidebar { width: 150px; margin: 1px 4px 0 0; display: flex; flex-direction: column; background: #eeeeea; height: 708px; }
.sb-tabs { height: 18px; display: flex; padding: 0 1px; flex: none; }
.sb-tab { width: 48px; text-align: center; line-height: 17px; color: #888; background: #f1f1ee; }
.sb-tab.on { background: #2f8fdc; color: #fff; border-radius: 6px 6px 0 0; }
.sb-search { height: 30px; display: flex; align-items: flex-start; padding: 7px 0 0 1px; gap: 4px; flex: none; }
.sb-input { width: 96px; height: 19px; background: #fff; border: 1px solid #777; border-radius: 1px; }
.sb-ibtn { width: 18px; height: 19px; display: inline-flex; align-items: center; justify-content: center; background: #e6e6e0; border-radius: 3px; }
.sb-head { height: 20px; margin-top: 1px; background: #dfdfda; border-bottom: 1px solid #bbb; display: flex; align-items: center; padding-left: 5px; font-size: 12px; flex: none; }
.sb-head b { font-weight: 700; }
.fold { margin-right: 6px; flex: none; }
.sb-list { height: 470px; background: #fff; font-size: 12px; color: #333; flex: none; }
.sb-root { height: 18px; display: flex; align-items: center; padding-left: 3px; }
.sb-item { height: 18px; display: flex; align-items: center; padding-left: 22px; }
.hl { background: #efefec; padding-right: 2px; }
.radio { width: 11px; height: 11px; border-radius: 50%; border: 1.5px solid #333; margin-right: 8px; background: #fff; flex: none; box-shadow: inset 1px 1px 0 #bbb; }
.radio.sel { background: radial-gradient(circle, #222 0 2px, #fff 2.5px); }
.sb-acc { height: 21px; background: #e2e2de; border-bottom: 1px solid #aaa; display: flex; align-items: center; padding-left: 5px; color: #222; font-size: 12px; flex: none; }
.sb-foot { height: 22px; display: flex; align-items: center; padding: 2px 0 0 5px; gap: 9px; font-size: 12px; flex: none; }
.sb-fav { color: #222; width: 48px; }
.sb-fbtn { width: 40px; height: 17px; background: #f4f4f0; color: #aaa; text-align: center; line-height: 16px; border-radius: 2px; }

.chart { width: 1200px; height: 709px; flex: none; display: flex; flex-direction: column; background: #f2f2f0; border: 1px solid #8a8a8a; }
.plot { display: block; flex: none; }
.axis { fill: #efefef; }
.paper { fill: #fff; }
.vp { fill: #c0c0c0; }
.vp-pink { fill: #e28c97; }
.vp-blue { fill: #4697c9; }
.pct text { font: 12px "Liberation Sans", sans-serif; fill: #111; text-anchor: end; }
.gridline { stroke: #e6e6e6; stroke-width: 1; }
.trend { stroke: #0000a8; stroke-width: 3; }
.hl-lines line { stroke: #000; stroke-width: 2.4; }
.lbl-red text { font: 12px "Liberation Sans", "Noto Sans CJK KR", sans-serif; fill: #d0202c; }
.lbl-blue text { font: 12px "Liberation Sans", "Noto Sans CJK KR", sans-serif; fill: #0a1e9e; }
.lbl-black { font: 12px "Liberation Sans", sans-serif; fill: #111; }
.red-arrow { stroke: #b01020; fill: none; }
.blue-arrow { stroke: #0a1e9e; fill: none; }
.ticks path { stroke: #ccc; }
.ax-txt text { font: 12px "Liberation Sans", sans-serif; fill: #111; }
.cur-red { fill: #ea0c14; }
.cur-txt { font: 12px "Liberation Sans", sans-serif; fill: #fff; }
.bar-r { fill: #c81420; }
.bar-b { fill: #0000b0; }
.tag rect { fill: #eafae8; stroke: #000; }
.tag text { font: 12px "Liberation Sans", sans-serif; fill: #000; }
.tagmark { fill: #c8c8c8; }
.legend text { font: 12px "Liberation Sans", "Noto Sans CJK KR", sans-serif; }
.zero { stroke: #808080; }
.osc0 { stroke: #e03838; }
.zero-txt { font: 12px "Liberation Sans", sans-serif; fill: #777; }
.sepline { stroke: #8a8a8a; stroke-width: 1; }

.dates { height: 19px; background: #fafafa; position: relative; border-top: 1px solid #ccc; font-size: 12px; flex: none; }
.d { position: absolute; top: 2px; padding-left: 1px; border-left: 1px solid #ccc; line-height: 15px; }
.d02 { left: 4px; border: 0; } .d03 { left: 17px; } .d04 { left: 172px; } .d05 { left: 327px; } .d06 { left: 481px; }
.d07 { left: 629px; } .d08 { left: 783px; } .d09 { left: 945px; } .d10 { left: 1094px; }

.bottombar { flex: 1; display: flex; align-items: center; background: #e8e8e4; min-height: 0; }
.btab { width: 15px; height: 15px; background: #dadad4; border: 1px solid #888; border-top-color: #bbb; text-align: center; line-height: 13px; font-size: 11.5px; flex: none; }
.bnav { width: 16px; height: 15px; background: #f4f4f0; border: 1px solid #888; font-size: 10px; line-height: 13px; text-align: center; flex: none; }
.dither { width: 752px; height: 15px; background: repeating-linear-gradient(45deg, #f2f2f0 0 1px, #e8e8e6 1px 2px); flex: none; }
.scrollbox { width: 38px; height: 15px; background: #e8e8e4; border: 1px solid #aaa; margin-right: 2px; flex: none; }
.slider { margin-left: 6px; flex: none; }
.bicons { display: flex; gap: 4px; align-items: center; margin-left: 3px; }
.icA { font: bold 13px "Liberation Sans", sans-serif; color: #555; width: 12px; }
.bicons2 { display: flex; gap: 2px; align-items: center; margin-left: 19px; }
.ib-on { background: #dde; border: 1px solid #999; }
.icL { font: bold 14px/14px "Liberation Sans", sans-serif; color: #20207a; width: 14px; text-align: center; }

.rails { width: 57px; margin: 1px 0 0 3px; display: grid; grid-template-columns: 28px 27px; grid-template-rows: 24px auto; column-gap: 2px; height: 708px; flex: none; }
.rail-head { display: flex; flex-direction: column; gap: 1px; }
.rh-btn { height: 11px; background: #e6e6e2; border: 1px solid #bbb; display: flex; align-items: center; justify-content: center; }
.rail { border-left: 1px solid #aaa; border-right: 1px solid #aaa; background: linear-gradient(#fff 0, #f2f2ee 30%, #e8e8e4 100%); display: flex; flex-direction: column; align-items: center; }
.rail-text { padding-top: 3px; background: #f0f0ec; }
.r1 { height: 22.2px; width: 100%; display: flex; align-items: center; justify-content: center; text-align: center; font: 700 10px/9.5px "Liberation Sans", "Noto Sans CJK KR", sans-serif; color: #222; flex: none; }
.rail-icons { padding-top: 3px; }
.ri { width: 25px; height: 22px; display: flex; align-items: center; justify-content: center; position: relative; flex: none; }
.ri svg { width: 19px; height: 19px; }
.ri-on { background: #eef; border: 1px solid #999; border-radius: 2px; height: 20px; margin-bottom: 1px; }
.ri-sep { width: 22px; height: 1px; background: #888; margin: 2px 0; flex: none; }
.corner { position: absolute; right: 1px; bottom: 2px; width: 0; height: 0; border-left: 4px solid transparent; border-bottom: 4px solid #555; }
.ri em { font-style: normal; }
.all { position: absolute; top: 1px; left: 6px; font: bold 7px "Liberation Sans", sans-serif; color: #d03020; }
.qm { font: 15px "Liberation Serif", serif; color: #333; }
.tt { font: bold 14px "Liberation Serif", serif; color: #222; }
.plus { position: absolute; top: 0; right: 3px; font-size: 8px; color: #e01010; }
.gg { position: absolute; top: 0; left: 3px; font: bold 8px "Liberation Sans", sans-serif; color: #d04010; }
.auto { position: absolute; bottom: 1px; left: 2px; font: bold 8px "Liberation Sans", sans-serif; color: #d03020; }
```

FILE: chart.js
```js
(function () {
  var NS = 'http://www.w3.org/2000/svg';
  function el(parent, tag, attrs) {
    var n = document.createElementNS(NS, tag);
    for (var k in attrs) n.setAttribute(k, attrs[k]);
    document.getElementById(parent).appendChild(n);
    return n;
  }
  var Z7 = [160, 360], Z8 = [530, 90], Z9 = [850, 290], Z10 = [530, 600], Z6 = [950, 600], Z5 = [0, 600];
  function pts(z, a) { var o = []; for (var i = 0; i < a.length; i += 2) o.push([z[0] + a[i] / 3, z[1] + a[i + 1] / 3]); return o; }
  function line(parent, list, color, w) {
    el(parent, 'polyline', { points: list.map(function (p) { return p[0].toFixed(1) + ',' + p[1].toFixed(1); }).join(' '), fill: 'none', stroke: color, 'stroke-width': w || 1 });
  }
  var RED = '#e00010', BLUE = '#0000c0';
  function X(i) { return 169 + 7.37 * i; }

  // candles: colour, wick top, body top, body bottom, wick bottom (in crop coordinates)
  var c7 = 'b460,472,488,495 r455,465,480,490 r415,425,445,450 b398,415,435,440 b410,432,437,445 b420,435,437,445 b445,455,472,478 r390,425,472,475 b412,425,428,440 b415,425,455,460 r450,457,459,470 r445,457,459,460 r365,394,415,425 b365,390,403,405 b390,393,402,405 r392,400,403,410 b392,395,412,416 r390,403,414,418 r378,397,407,410 b378,392,396,400 r385,396,399,405 b383,385,405,420 r375,392,408,412 r372,378,395,400 r348,358,374,380 r338,350,352,365 b350,352,372,375 b375,378,402,405 r385,402,410,412 b385,390,412,415 r370,380,425,438 b360,370,382,405 b345,347,360,372 r340,347,349,360 b333,347,367,375 r365,372,382,395 r325,343,365,370 b330,343,362,365 r72,298,345,348 b278,295,307,332 b298,306,310,320 r268,287,315,328 b280,283,318,325 b305,312,328,333 b312,320,332,335 r265,277,328,330 b255,270,286,290 b285,287,305,310 b310,313,358,360 r340,358,380,420 b340,372,378,380 r40,45,362,362';
  var c8 = 'b815,832,857,915 b707,840,866,908 r798,822,880,895 b800,822,862,870 r785,798,903,910 b805,820,838,850 b830,835,897,908 b905,923,975,990 b940,962,970,1005 b940,973,982,1000 r960,965,980,990 r880,927,965,970 r540,655,910,940 b650,695,699,725 r560,697,704,780 r405,598,638,660 r115,337,437,490 b290,330,338,437 b370,375,482,490 b295,457,508,543 r490,498,557,575 b472,538,625,638 b522,610,627,632 b655,674,680,735 b280,535,840,860 r490,630,752,857 b615,660,782,808 b655,798,922,943 r875,895,950,952 r705,770,895,895 b660,772,788,835 r740,808,838,840 b813,813,890,903 b875,895,911,935 b792,910,950,995 r893,893,938,968 r830,858,905,905 r825,850,866,870 b808,820,830,835 b785,832,838,845 b750,855,897,905';
  var c9 = 'b270,295,300,352 r270,303,322,325 b280,297,301,342 r195,225,310,312 r195,210,235,240 r128,148,198,228 b100,102,200,208 b195,197,240,243 r235,250,270,270 r205,208,255,258 b150,220,238,243 r205,225,230,232 r100,208,225,232 r148,183,207,210 b178,184,225,228 r210,222,232,263 b200,225,231,255 b212,230,238,258 b210,230,288,295 b275,277,293,296 r150,283,296,298 b245,275,278,290 r262,274,277,292 r260,272,275,290 b245,260,275,278 b280,288,324,324 r105,190,305,322 b222,238,247,262 b262,265,322,325 b303,322,324,347 r285,318,320,322 r238,282,318,322 r295,320,345,348 r238,265,320,322 r240,257,273,280 b232,255,303,308 b305,310,325,335 r320,337,343,372 r305,325,347,348 b312,333,416,417 b395,405,423,443 r245,352,410,415 b380,408,420,433 b400,404,428,430 b430,440,468,470 b470,470,518,528 r455,502,523,525 r420,520,523,525 r520,532,538,563 b535,558,590,607 b602,620,674,676 r570,660,667,695 b622,660,707,732 b635,703,705,705 b695,715,717,737 r652,667,704,704 r345,518,522,528';
  var candles = [];
  [[c7, Z7], [c8, Z8], [c9, Z9]].forEach(function (s) {
    s[0].split(' ').forEach(function (t) {
      var v = t.slice(1).split(',').map(Number);
      candles.push({ col: t[0] === 'r' ? RED : BLUE, wt: s[1][1] + v[0] / 3, bt: s[1][1] + v[1] / 3, bb: s[1][1] + v[2] / 3, wb: s[1][1] + v[3] / 3 });
    });
  });
  candles.forEach(function (c, i) {
    var x = Math.round(X(i));
    el('candles', 'rect', { x: x, y: c.wt.toFixed(1), width: 1, height: (c.wb - c.wt).toFixed(1), fill: c.col });
    var h = Math.max(2, c.bb - c.bt);
    el('candles', 'rect', { x: x - 3, y: c.bt.toFixed(1), width: 7, height: h.toFixed(1), fill: c.col });
  });

  // moving averages
  var ma = [
    ['#802030', pts(Z9, [0, 700, 600, 650, 1100, 618, 1250, 613]), [[165, 569]]],
    ['#e84050', [].concat(pts(Z7, [20, 398, 140, 410, 270, 395, 600, 380, 1000, 345, 1200, 343]), pts(Z9, [0, 485, 300, 470, 740, 465, 1250, 470]))],
    ['#701040', [].concat(pts(Z7, [20, 360, 140, 385, 300, 395, 500, 395, 700, 405, 1000, 410, 1200, 400]), pts(Z9, [0, 462, 200, 435, 400, 405, 600, 370, 800, 342, 950, 325]))],
    ['#000090', [].concat(pts(Z7, [20, 415, 140, 425, 400, 425, 640, 425, 900, 420, 1130, 395, 1200, 372]), pts(Z8, [450, 1050, 500, 1020, 600, 975, 690, 950, 780, 925, 850, 910, 960, 885]), pts(Z9, [60, 268, 100, 265, 250, 235, 330, 205, 385, 193, 500, 195, 650, 195, 730, 195, 830, 235, 950, 265, 1100, 295, 1180, 322, 1250, 345]))],
    ['#40d0c0', [].concat(pts(Z7, [20, 420, 140, 430, 270, 440, 350, 420, 500, 410, 700, 410, 800, 385, 900, 365, 1100, 345, 1200, 340]), pts(Z8, [260, 1050, 340, 1000, 430, 925, 530, 820, 620, 760, 700, 742, 770, 740, 860, 750, 920, 740]), pts(Z9, [60, 145, 80, 150, 130, 180, 200, 225, 300, 240, 400, 240, 500, 250, 600, 265, 800, 270, 900, 300, 1000, 340, 1100, 390, 1200, 430, 1250, 445]))],
    ['#2f8fc0', [].concat(pts(Z7, [20, 440, 140, 450, 270, 455, 350, 435, 450, 415, 600, 405, 700, 405, 800, 370, 900, 365, 1000, 345, 1100, 330, 1190, 320]), pts(Z8, [150, 1050, 200, 1020, 300, 985, 360, 920, 420, 830, 470, 765, 520, 725, 620, 700, 700, 680, 750, 658, 830, 705, 880, 760, 960, 835]), pts(Z9, [40, 225, 60, 235, 140, 250, 250, 255, 320, 235, 400, 240, 480, 235, 600, 260, 700, 280, 800, 270, 900, 310, 1000, 370, 1100, 430, 1180, 500, 1250, 522]))],
    ['#20d020', [].concat(pts(Z7, [20, 450, 140, 450, 270, 450, 300, 430, 400, 410, 500, 395, 560, 378, 620, 375, 700, 385, 760, 380, 840, 368, 930, 335, 1040, 305, 1100, 318, 1150, 310]), pts(Z8, [90, 1050, 150, 960, 210, 890, 240, 875, 300, 905, 380, 860, 410, 810, 450, 690, 500, 570, 530, 540, 570, 538, 620, 555, 660, 650, 700, 740, 760, 810, 810, 830, 850, 860, 900, 855, 960, 875]), pts(Z9, [40, 287, 60, 290, 110, 260, 180, 220, 270, 212, 340, 215, 400, 232, 470, 245, 560, 280, 620, 270, 700, 285, 800, 285, 880, 310, 950, 340, 1000, 390, 1080, 455, 1130, 520, 1180, 600, 1230, 628, 1250, 628]))],
    ['#e01020', [].concat(pts(Z7, [20, 445, 140, 445, 270, 445, 290, 430, 340, 418, 400, 405, 500, 395, 560, 378, 620, 375, 700, 375, 760, 375, 840, 370, 900, 335, 960, 320, 1040, 310, 1100, 320, 1130, 330, 1160, 300]), pts(Z8, [66, 1045, 120, 930, 150, 860, 185, 838, 215, 880, 240, 875, 300, 965, 340, 880, 400, 700, 415, 600, 470, 480, 510, 433, 550, 520, 600, 650, 640, 690, 685, 815, 720, 800, 760, 830, 800, 830, 840, 890, 880, 880, 930, 855, 960, 865]), pts(Z9, [40, 275, 80, 270, 120, 240, 160, 215, 210, 225, 260, 225, 300, 210, 340, 215, 400, 230, 450, 280, 500, 285, 560, 270, 600, 265, 660, 290, 720, 290, 770, 280, 830, 300, 880, 340, 930, 370, 980, 420, 1040, 490, 1090, 540, 1150, 620, 1190, 690, 1230, 675, 1250, 655]))]
  ];
  ma.forEach(function (m) { line('mas', (m[2] || []).concat(m[1]), m[0]); });

  // month grid and price grid
  var months = [181, 335, 490, 644, 792, 946, 1108, 1257];
  var panels = [['grid-main', 78, 600, [115, 197, 280, 363, 445, 528]], ['grid-vol', 601, 666, [627, 645.5]], ['grid-macd', 667, 719, []], ['grid-osc', 720, 751, []]];
  panels.forEach(function (p) {
    months.forEach(function (x) { el(p[0], 'line', { x1: x + .5, x2: x + .5, y1: p[1], y2: p[2], class: 'gridline' }); });
    p[3].forEach(function (y) { el(p[0], 'line', { x1: 164, x2: 1293, y1: y + .5, y2: y + .5, class: 'gridline' }); });
  });

  // volume bars
  var vol = { 38: 11, 39: 3, 40: 2, 41: 2, 51: 30, 52: 11, 53: 9, 54: 6, 55: 4, 56: 5, 64: 46, 65: 6, 66: 15, 67: 27, 68: 46, 69: 9, 70: 4, 71: 10, 76: 33, 77: 31, 78: 3, 79: 5, 81: 6, 82: 4, 92: 5, 109: 3, 119: 18, 134: 7, 149: 12 };
  candles.forEach(function (c, i) {
    var h = vol[i] || (i < 38 ? 0 : i < 51 ? 1 : 2);
    if (!h) return;
    var col = c.col;
    if (i === 71 || i === 76 || i === 68) col = '#f00010';
    if (i === 77) col = BLUE;
    el('volbars', 'rect', { x: Math.round(X(i)) - 3, y: 666 - h, width: 7, height: h, fill: col === RED ? '#f00010' : col });
  });
  line('vollines', [[164, 665], [1293, 665]], '#0000a0');
  line('vollines', [].concat(pts(Z10, [30, 190, 60, 170, 130, 160, 175, 182, 210, 188, 300, 192, 330, 165, 400, 130, 420, 112, 445, 135, 490, 140, 530, 185, 590, 180, 630, 155, 680, 155, 730, 185, 830, 192, 1290, 192])), '#408010');
  line('vollines', [].concat(pts(Z10, [-600, 193, 30, 192, 100, 190, 170, 185, 300, 185, 340, 183, 420, 162, 520, 170, 600, 165, 630, 155, 780, 165, 870, 180, 1020, 180, 1040, 187, 1090, 190, 1290, 195]), pts(Z6, [100, 186, 400, 190, 940, 190])), '#2f8fc0');
  line('vollines', [].concat(pts(Z10, [-600, 194, 300, 188, 600, 183, 1290, 178]), pts(Z6, [100, 182, 385, 185, 940, 187])), '#000090', 1.2);
  line('vollines', [[164, 664], [1266, 662]], '#701848');

  // MACD
  line('macdlines', [].concat(pts(Z5, [495, 321, 1440, 320]), pts(Z10, [30, 315, 50, 300, 110, 285, 175, 287, 230, 300, 285, 310, 330, 295, 380, 290, 440, 258, 500, 268, 550, 290, 600, 307, 640, 318, 700, 325, 760, 325, 810, 333, 870, 330, 960, 325, 1040, 325, 1090, 317, 1180, 316, 1270, 318]), pts(Z6, [100, 322, 200, 325, 265, 322, 400, 324, 520, 325, 700, 338, 800, 345, 900, 353, 930, 352, 945, 342])), '#e05030');
  line('macdlines', [].concat(pts(Z5, [495, 320, 1440, 318]), pts(Z10, [30, 315, 110, 295, 190, 288, 300, 305, 400, 285, 460, 270, 510, 272, 600, 295, 660, 310, 700, 320, 800, 325, 880, 330, 960, 326, 1030, 328, 1090, 318, 1270, 318]), pts(Z6, [80, 318, 200, 322, 265, 326, 400, 320, 520, 323, 700, 335, 800, 342, 900, 352, 930, 350, 945, 340])), '#40b8b8');

  function arrow(parent, x, y, col, up) {
    var d = up ? 'M0 -6 L4 -1 H1.5 V5 H-1.5 V-1 H-4 Z' : 'M0 6 L4 1 H1.5 V-5 H-1.5 V1 H-4 Z';
    el(parent, 'path', { d: d, fill: col, transform: 'translate(' + x + ' ' + y + ')' });
  }
  var BL = '#1850d8', MR = '#7a0c14';
  [[213, 700], [235, 700], [323, 699], [367, 698], [426, 699], [485, 697], [515, 697], [596, 691], [699, 684], [854, 703], [905, 701], [964, 699], [1038, 702], [1060, 701], [1119, 701]].forEach(function (a) { arrow('arrows-macd', a[0], a[1], BL, false); });
  [[183, 712], [220, 712], [257, 711], [338, 711], [397, 711], [434, 711], [499, 709], [544, 707], [640, 704], [824, 715], [876, 715], [942, 711], [1030, 713], [1045, 712], [1097, 713]].forEach(function (a) { arrow('arrows-macd', a[0], a[1], MR, true); });
  arrow('arrows-main', 206, 513, MR, true);
  arrow('arrows-main', 405, 494, MR, true);
  arrow('arrows-main', 176, 510, '#3070d8', false);
  arrow('arrows-main', 397, 484, '#3070d8', false);
  arrow('arrows-main', 537, 466, '#3070d8', false);
  el('arrows-main', 'path', { d: 'M541 362 H547 V368 H551 L544 375 L537 368 H541 Z', fill: '#e02020' });

  // oscillator histogram: px above (+) or below (-) the base line
  var osc = {};
  function fill(a, b, v) { for (var i = a; i <= b; i++) osc[i] = v; }
  fill(51, 52, 1); fill(53, 53, 1); fill(54, 57, 2); fill(58, 59, 1); fill(60, 61, -1); fill(62, 63, -2);
  fill(64, 66, 1); osc[67] = 2; osc[68] = 4; osc[69] = 6; osc[70] = 4; osc[71] = 3; osc[72] = 2; osc[73] = 1;
  osc[75] = -1; fill(76, 77, -3); osc[78] = -4; fill(79, 81, -6); fill(82, 85, -5); osc[86] = -6; osc[87] = -5;
  fill(88, 89, -4); fill(90, 92, -3); fill(93, 100, -2); fill(103, 104, 1); fill(110, 118, -2); fill(121, 125, -2);
  fill(130, 135, -2); fill(136, 137, -3); fill(138, 142, -2); fill(143, 147, -4); osc[148] = -3; osc[149] = -2;
  fill(29, 31, -1);
  Object.keys(osc).forEach(function (k) {
    var v = osc[k], x = Math.round(X(+k)) - 3;
    el('oscbars', 'rect', { x: x, y: v > 0 ? 743 - v : 744, width: 6, height: Math.abs(v), fill: v > 0 ? '#f08088' : '#2f88c8' });
  });
})();
```
